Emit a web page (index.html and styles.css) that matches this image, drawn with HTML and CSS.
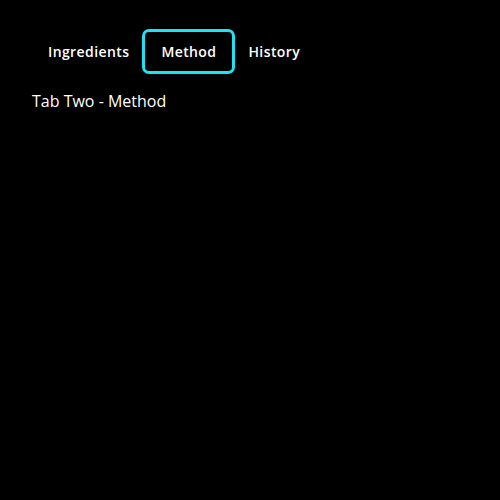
FILE: index.html
```html
<!DOCTYPE html>
<html>
<head>
<meta charset="utf-8">
<link rel="stylesheet" href="styles.css">
</head>
<body>
<div class="app">
  <div class="tabs" role="tablist">
    <button class="tab" role="tab">Ingredients</button>
    <button class="tab active" role="tab">Method</button>
    <button class="tab" role="tab">History</button>
  </div>
  <div class="panel">Tab Two - Method</div>
</div>
</body>
</html>
```
FILE: styles.css
```css
html, body {
  margin: 0;
  background: #000;
  height: 100%;
}
.app {
  padding: 32px;
  font-family: "Open Sans", sans-serif;
  color: #fff;
}
.tabs {
  display: flex;
}
.tab {
  font-family: "Open Sans", sans-serif;
  font-weight: 600;
  font-size: 14px;
  line-height: 20px;
  letter-spacing: 0.4px;
  color: #fff;
  background: transparent;
  border: none;
  padding: 10px 16px 9px;
  border-radius: 4px;
  margin: 0;
}
.tab.active {
  outline: 3px solid #1de2f3;
  outline-offset: 0;
}
.panel {
  margin-top: 18px;
  font-size: 16px;
  line-height: 24px;
}
```
